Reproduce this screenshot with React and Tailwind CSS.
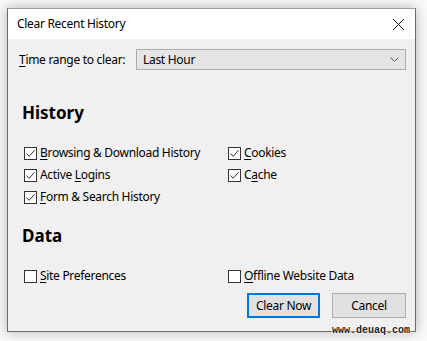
import React from "react";

const F = { fontFamily: '"Noto Sans", "Open Sans", Arial, sans-serif' };

function Box({ checked }) {
  return (
    <span className="w-[13px] h-[13px] border border-[#333333] bg-white flex items-center justify-center shrink-0">
      {checked && (
        <svg width="11" height="11" viewBox="0 0 11 11">
          <path d="M1.5 5.5 L4.2 8.3 L9.6 2.2" fill="none" stroke="#333" strokeWidth="1" />
        </svg>
      )}
    </span>
  );
}

function Check({ checked, pre, u, post }) {
  return (
    <div className="flex items-center h-[22px]">
      <Box checked={checked} />
      <span className="ml-[3px] text-[12px] tracking-[-0.3px] text-black leading-none">
        {pre}
        <span className="underline underline-offset-2">{u}</span>
        {post}
      </span>
    </div>
  );
}

export default function App() {
  return (
    <div className="w-[427px] h-[341px] bg-[#f9f9f9] pl-[7px] pt-[8px] relative overflow-hidden" style={F}>
      <div className="w-[409px] h-[324px] border border-[#6b6b6b] border-t-[#9a9a9a] flex flex-col shadow-[0_0_12px_rgba(0,0,0,0.28)]">
        <div className="h-[30px] bg-white flex items-center justify-between pl-[9px] pr-[10px] shrink-0">
          <span className="text-[12px] tracking-[-0.3px] text-black">Clear Recent History</span>
          <svg width="13" height="13" viewBox="0 0 13 13">
            <path d="M1 1 L12 12 M12 1 L1 12" stroke="#111" strokeWidth="1" />
          </svg>
        </div>
        <div className="flex-1 bg-[#f0f0f0] flex flex-col pt-[10px]">
          <div className="flex items-center pl-[11px] h-[21px]">
            <span className="text-[12px] tracking-[-0.3px] text-black w-[117px]">
              <span className="underline underline-offset-2">T</span>ime range to clear:
            </span>
            <div className="w-[270px] h-[21px] border border-[#acacac] bg-[#e5e5e5] flex items-center justify-between pl-[6px] pr-[6px]">
              <span className="text-[12px] tracking-[-0.3px] text-black">Last Hour</span>
              <svg width="9" height="6" viewBox="0 0 9 6">
                <path d="M0.5 0.5 L4.5 4.5 L8.5 0.5" fill="none" stroke="#555" strokeWidth="1" />
              </svg>
            </div>
          </div>
          <div className="pl-[14px] mt-[32px] text-[17px] font-bold leading-[22px] text-black">History</div>
          <div className="flex pl-[16px] mt-[18px]">
            <div className="w-[204px] flex flex-col">
              <Check checked u="B" post="rowsing & Download History" />
              <Check checked pre="Active " u="L" post="ogins" />
              <Check checked u="F" post="orm & Search History" />
            </div>
            <div className="flex flex-col">
              <Check checked u="C" post="ookies" />
              <Check checked pre="C" u="a" post="che" />
            </div>
          </div>
          <div className="pl-[14px] mt-[17px] text-[17px] font-bold leading-[22px] text-black">Data</div>
          <div className="flex pl-[16px] mt-[18px]">
            <div className="w-[204px]">
              <Check u="S" post="ite Preferences" />
            </div>
            <Check u="O" post="ffline Website Data" />
          </div>
          <div className="flex justify-end gap-[12px] pr-[9px] mt-[6px]">
            <div className="w-[73px] h-[25px] border-2 border-[#0078d7] bg-[#e1e1e1] flex items-center justify-center text-[12px] tracking-[-0.3px] text-black">
              Clear Now
            </div>
            <div className="w-[74px] h-[25px] border border-[#adadad] bg-[#e1e1e1] flex items-center justify-center text-[12px] tracking-[-0.3px] text-black">
              Cancel
            </div>
          </div>
        </div>
      </div>
      <div
        className="absolute left-[332px] top-[324px] text-[10px] leading-[14px] font-bold text-[#222]"
        style={{ fontFamily: '"Liberation Mono", monospace', textShadow: "0 0 2px #fff, 0 0 2px #fff, 0 0 2px #fff" }}
      >
        www.deuaq.com
      </div>
    </div>
  );
}
